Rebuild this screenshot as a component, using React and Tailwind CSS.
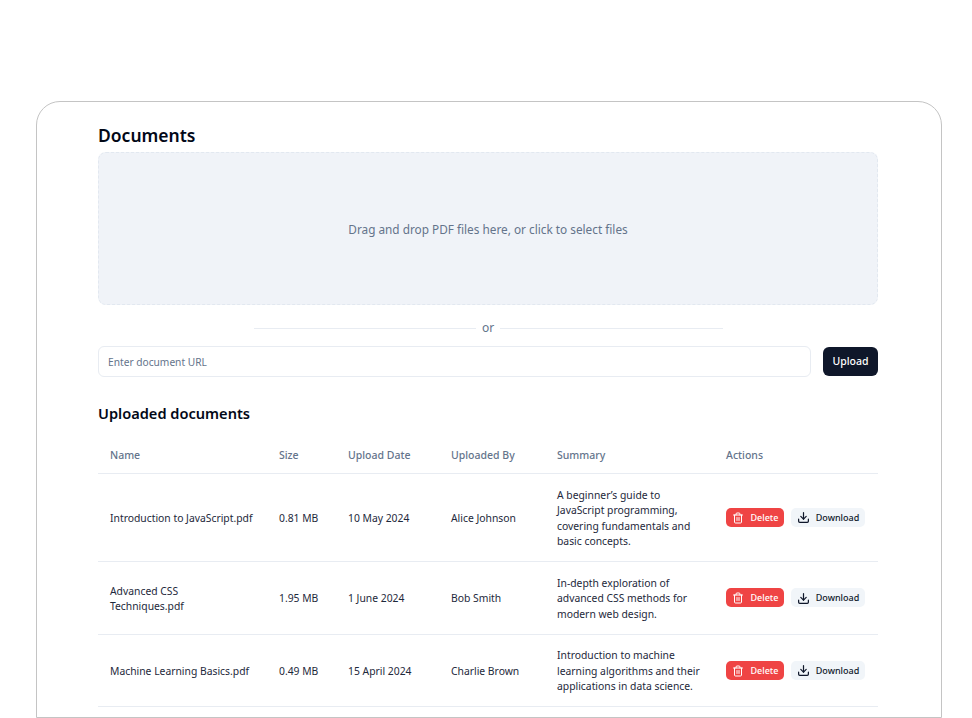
import { Trash2, Download } from 'lucide-react'

const docs = [
  {
    name: 'Introduction to JavaScript.pdf',
    size: '0.81 MB',
    date: '10 May 2024',
    by: 'Alice Johnson',
    summary: 'A beginner’s guide to JavaScript programming, covering fundamentals and basic concepts.',
    height: 'h-[88px]',
  },
  {
    name: 'Advanced CSS Techniques.pdf',
    size: '1.95 MB',
    date: '1 June 2024',
    by: 'Bob Smith',
    summary: 'In-depth exploration of advanced CSS methods for modern web design.',
    height: 'h-[73px]',
  },
  {
    name: 'Machine Learning Basics.pdf',
    size: '0.49 MB',
    date: '15 April 2024',
    by: 'Charlie Brown',
    summary: 'Introduction to machine learning algorithms and their applications in data science.',
    height: 'h-[72px]',
  },
]

export default function App() {
  return (
    <div className="h-[718px] overflow-hidden bg-white pt-[101px] pl-[36px] font-['Noto_Sans',sans-serif]">
      <div className="w-[906px] h-[617px] border border-[#c4c4c4] rounded-t-[24px] pl-[61px] pr-[63px] pt-[21px]">
        <h1 className="text-[17.5px] leading-[24px] font-semibold text-[#020817]">Documents</h1>

        <div className="mt-[5px] h-[153px] pt-[2px] flex items-center justify-center bg-[#f0f3f8] border border-dashed border-[#e2e8f0] rounded-lg text-[11.8px] text-[#64748b]">
          Drag and drop PDF files here, or click to select files
        </div>

        <div className="mt-[15px] mx-auto w-[469px] flex items-center gap-[6px] h-[16px]">
          <div className="flex-1 h-px bg-[#e8ecf2]"></div>
          <span className="text-[12px] leading-[16px] text-[#64748b]">or</span>
          <div className="flex-1 h-px bg-[#e8ecf2]"></div>
        </div>

        <div className="mt-[10px] flex items-center gap-[12px]">
          <input
            placeholder="Enter document URL"
            className="flex-1 h-[31px] px-[9px] border border-[#e8ecf2] rounded-md text-[10.2px] text-[#020817] placeholder:text-[#64748b] outline-none"
          />
          <button className="h-[29px] w-[55px] bg-[#0f172a] text-white text-[10.5px] font-medium rounded-md">
            Upload
          </button>
        </div>

        <h2 className="mt-[25px] text-[14.6px] leading-[22px] font-semibold text-[#020817]">Uploaded documents</h2>

        <table className="mt-[13px] w-[780px] table-fixed border-collapse text-[#1e293b]">
          <colgroup>
            <col className="w-[169px]" />
            <col className="w-[69px]" />
            <col className="w-[103px]" />
            <col className="w-[106px]" />
            <col className="w-[169px]" />
            <col className="w-[164px]" />
          </colgroup>
          <thead>
            <tr className="h-[36px] border-b border-[#e8ecf2] text-left text-[10.5px] text-[#64748b]">
              <th className="px-[12px] pt-[2px] font-medium">Name</th>
              <th className="px-[12px] pt-[2px] font-medium">Size</th>
              <th className="px-[12px] pt-[2px] font-medium">Upload Date</th>
              <th className="px-[12px] pt-[2px] font-medium">Uploaded By</th>
              <th className="px-[12px] pt-[2px] font-medium">Summary</th>
              <th className="px-[12px] pt-[2px] font-medium">Actions</th>
            </tr>
          </thead>
          <tbody>
            {docs.map((doc) => (
              <tr key={doc.name} className={`${doc.height} border-b border-[#e8ecf2] text-[10.35px] leading-[15.5px]`}>
                <td className="pl-[12px] pr-[13px] pt-[3px]">{doc.name}</td>
                <td className="px-[12px] pt-[3px]">{doc.size}</td>
                <td className="px-[12px] pt-[3px]">{doc.date}</td>
                <td className="px-[12px] pt-[3px]">{doc.by}</td>
                <td className="px-[12px] pt-[3px]">{doc.summary}</td>
                <td className="px-[12px]">
                  <div className="flex items-center gap-[7px]">
                    <button className="h-[19px] w-[58px] pt-[1px] flex items-center justify-center gap-[7px] bg-[#ef4444] text-white rounded-[5px] text-[9px] font-medium">
                      <Trash2 size={12} />
                      Delete
                    </button>
                    <button className="h-[19px] w-[74px] pt-[1px] flex items-center justify-center gap-[6px] bg-[#f1f5f9] text-[#0f172a] rounded-[5px] text-[9px] font-medium">
                      <Download size={13} strokeWidth={2.25} />
                      Download
                    </button>
                  </div>
                </td>
              </tr>
            ))}
          </tbody>
        </table>
      </div>
    </div>
  )
}
